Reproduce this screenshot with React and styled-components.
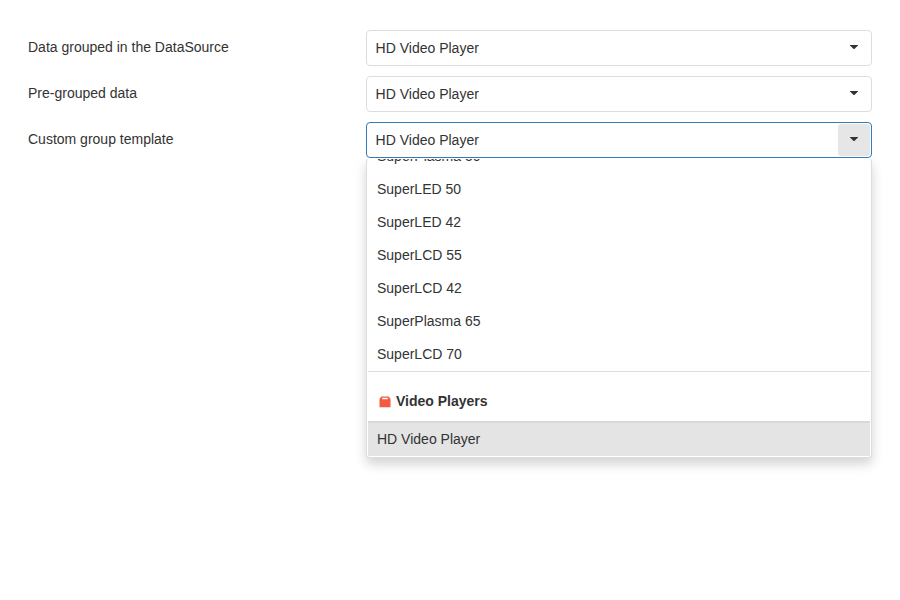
import React from "react";
import styled, { createGlobalStyle, css } from "styled-components";

const GlobalStyle = createGlobalStyle`
  body {
    margin: 0;
    background: #fff;
    color: #333;
    font: 14px/18px "Liberation Sans", Arial, sans-serif;
  }
`;

const Form = styled.main`
  box-sizing: border-box;
  min-height: 100vh;
  display: flex;
  flex-direction: column;
  gap: 10px;
  padding: 30px 28px;
`;

const Field = styled.div`
  display: flex;
  justify-content: space-between;
  height: 36px;
`;

const Label = styled.div`
  padding-top: 8px;
`;

const Editor = styled.div`
  position: relative;
  width: 506px;
`;

const SelectBox = styled.div`
  position: relative;
  z-index: 2;
  box-sizing: border-box;
  display: flex;
  align-items: center;
  justify-content: space-between;
  height: 36px;
  padding: 1px 1px 1px 8.6px;
  border: 1px solid ${(p) => (p.$open ? "#337ab7" : "#ddd")};
  border-radius: 4px;
  background: #fff;
`;

const DropButton = styled.div`
  display: flex;
  align-items: center;
  justify-content: center;
  width: 32px;
  height: 32px;
  border-radius: 3px;
  background: ${(p) => (p.$open ? "#e6e6e6" : "transparent")};
`;

const Arrow = styled.svg`
  display: block;
  margin-bottom: 2px;
`;

const Popup = styled.div`
  position: absolute;
  z-index: 1;
  top: 36px;
  left: 0;
  box-sizing: border-box;
  display: flex;
  width: 506px;
  height: 300px;
  padding: 0 1px 1px;
  border: 1px solid #ddd;
  border-top-color: #fff;
  border-radius: 4px;
  background: #fff;
  box-shadow: 0 6px 12px rgba(0, 0, 0, 0.175);
`;

const List = styled.div`
  flex: 1;
  display: flex;
  flex-direction: column;
  justify-content: flex-end;
  overflow: hidden;
`;

const Item = styled.div`
  flex: none;
  box-sizing: border-box;
  height: 33px;
  padding: 7px 9px 8px;
  ${(p) =>
    p.$selected &&
    css`
      height: 34px;
      padding-top: 7px;
      border-top: 1px solid #d8d8d8;
      background: #e4e4e4;
    `}
`;

const GroupHeader = styled.div`
  flex: none;
  box-sizing: border-box;
  display: flex;
  align-items: flex-start;
  gap: 5px;
  height: 51px;
  padding: 20px 10px 0 11px;
  border-top: 1px solid #ddd;
  border-bottom: 1px solid #d8d8d8;
  font-weight: 700;
`;

const GroupIcon = styled.svg`
  flex: none;
  margin-top: 4px;
`;

const products = [
  "SuperPlasma 50",
  "SuperLED 50",
  "SuperLED 42",
  "SuperLCD 55",
  "SuperLCD 42",
  "SuperPlasma 65",
  "SuperLCD 70",
];

function Select({ open = false }) {
  return (
    <SelectBox $open={open}>
      <span>HD Video Player</span>
      <DropButton $open={open}>
        <Arrow width="8" height="4" viewBox="0 0 8 4">
          <path d="M0 0h8v.4L4.4 4h-.8L0 .4z" fill="#333" />
        </Arrow>
      </DropButton>
    </SelectBox>
  );
}

function BoxIcon() {
  return (
    <GroupIcon width="12" height="12" viewBox="0 0 12 12">
      <path
        fillRule="evenodd"
        fill="#f05b41"
        d="M2.3.5h7.4l1.8 2.6v8.1H.5V3.1zM3.2 1.8v1.5h5.6V1.8z"
      />
    </GroupIcon>
  );
}

export default function App() {
  return (
    <>
      <GlobalStyle />
      <Form>
        <Field>
          <Label>Data grouped in the DataSource</Label>
          <Editor>
            <Select />
          </Editor>
        </Field>
        <Field>
          <Label>Pre-grouped data</Label>
          <Editor>
            <Select />
          </Editor>
        </Field>
        <Field>
          <Label>Custom group template</Label>
          <Editor>
            <Select open />
            <Popup>
              <List>
                {products.map((name) => (
                  <Item key={name}>{name}</Item>
                ))}
                <GroupHeader>
                  <BoxIcon />
                  Video Players
                </GroupHeader>
                <Item $selected>HD Video Player</Item>
              </List>
            </Popup>
          </Editor>
        </Field>
      </Form>
    </>
  );
}
